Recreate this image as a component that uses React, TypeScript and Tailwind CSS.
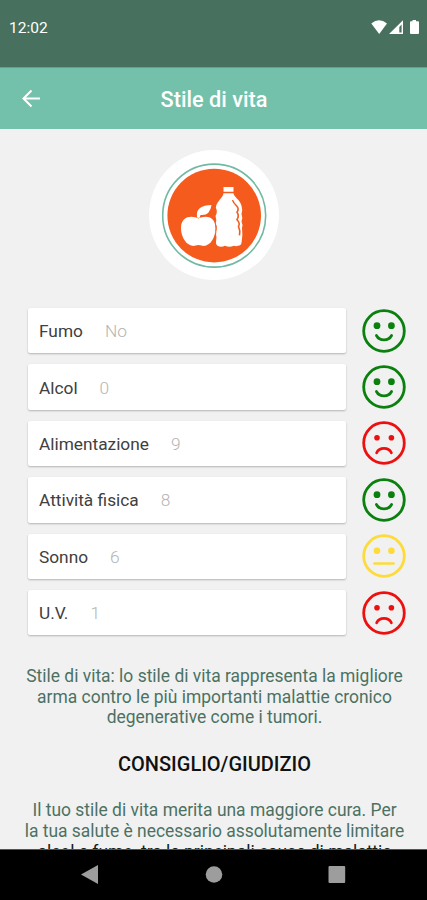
type Mood = "happy" | "neutral" | "sad";

type HabitRowProps = {
  label: string;
  value: string;
  mood: Mood;
};

const habits: HabitRowProps[] = [
  { label: "Fumo", value: "No", mood: "happy" },
  { label: "Alcol", value: "0", mood: "happy" },
  { label: "Alimentazione", value: "9", mood: "sad" },
  { label: "Attività fisica", value: "8", mood: "happy" },
  { label: "Sonno", value: "6", mood: "neutral" },
  { label: "U.V.", value: "1", mood: "sad" },
];

const moodConfig = {
  happy: { color: "text-[#0b800f]", mouth: "M14.4 26.5C17.5 32.4 26.5 32.4 29.6 26.5", eye: 3.4 },
  neutral: { color: "text-[#fddb3a]", mouth: "M12.5 29.5H31.5", eye: 3.3 },
  sad: { color: "text-[#ec1010]", mouth: "M14.6 31.8C17.5 26 26.5 26 29.4 31.8", eye: 2.8 },
};

function MoodFace({ mood }: { mood: Mood }) {
  const { color, mouth, eye } = moodConfig[mood];

  return (
    <svg viewBox="0 0 44 44" className={`size-11 shrink-0 ${color}`} fill="none" stroke="currentColor">
      <circle cx="22" cy="22" r="20.3" strokeWidth="2.8" />
      <circle cx="15" cy="16.7" r={eye} fill="currentColor" stroke="none" />
      <circle cx="29.4" cy="16.7" r={eye} fill="currentColor" stroke="none" />
      <path d={mouth} strokeWidth="2.7" strokeLinecap="round" />
    </svg>
  );
}

function HabitRow({ label, value, mood }: HabitRowProps) {
  return (
    <div className="flex h-[45.4px] items-center justify-between">
      <div className="flex h-full w-[318px] items-center gap-[22px] rounded-[2px] bg-white pt-[3px] pl-[11px] text-[17.3px] shadow-[0_1px_2px_rgba(0,0,0,0.25)]">
        <span className="text-[#404040]">{label}</span>
        <span className="font-light text-[#b4b4b4]">{value}</span>
      </div>
      <MoodFace mood={mood} />
    </div>
  );
}

function StatusBar() {
  return (
    <div className="flex h-[67px] shrink-0 items-start justify-between bg-[#48705e] pt-[18px] pr-[7px] pl-[9px] text-white">
      <span className="text-[15.5px] leading-5">12:02</span>
      <svg viewBox="0 0 50 16" className="mt-[1px] h-4 w-[50px]" fill="currentColor">
        <path d="M1.3 4.5Q9 -2 17 4.5L9.2 15Z" />
        <path fillRule="evenodd" d="M19 15L33 1.3V15ZM29.3 8V13.5H31.6V5.5Z" />
        <path d="M42.5 1H46V2.2H48Q49 2.2 49 3.2V14Q49 15 48 15H41Q40 15 40 14V3.2Q40 2.2 41 2.2H42.5Z" />
      </svg>
    </div>
  );
}

function Header() {
  return (
    <header className="grid h-[62px] shrink-0 grid-cols-[1fr_auto_1fr] items-center border-t border-[#62a18b] bg-[#73c1aa] text-white">
      <svg viewBox="0 0 20 20" className="ml-[21px] size-5" fill="none" stroke="currentColor" strokeWidth="2">
        <path d="M19 9.5H3M10.5 1.5L2.5 9.5L10.5 17.5" />
      </svg>
      <h1 className="pt-[3px] pl-[1px] text-[21.7px] font-medium">Stile di vita</h1>
    </header>
  );
}

function FoodBadge() {
  return (
    <svg viewBox="0 0 130 130" className="mx-auto h-[130px] w-[130px]">
      <circle cx="65" cy="65" r="65" fill="#fff" />
      <circle cx="65.2" cy="65.6" r="51.5" fill="none" stroke="#72b9a4" strokeWidth="1.6" />
      <circle cx="65.2" cy="65.6" r="46.8" fill="#f45b1d" />
      {/* apple */}
      <path
        fill="#fff"
        d="M49.5 68.5C44 65.5 32 65 32 78C32 86 36 93 41 95C45 97 46 95 49.5 95C53 95 54 97 58 95C63 93 66.5 86 66.5 78C66.5 65 55 65.5 49.5 68.5Z"
      />
      <path fill="#fff" d="M48 67.5Q47 61 51 58Q55 55 62.5 55Q61 66 51.5 65L50.5 68Z" />
      {/* bottle */}
      <g transform="translate(-1 2.7) scale(1 0.93)">
        <path
          fill="#fff"
          d="M75.5 37H85.5V42H75.5ZM75.5 43.5H85.5C86 48 92 50 93.5 57Q95 62 93.5 66Q95 70 93.5 74Q95 77 94 81Q95 88 93.5 97Q93 100 90 100Q88 101 86 100Q81 102 77 100Q73 102 69.5 100Q67.5 99 68 96Q69 90 67.5 85Q70 80 67.5 76Q69 72 67.5 68Q70 64 67.8 59C69 51 75 49 75.5 43.5Z"
        />
        <path
          fill="none"
          stroke="#f45b1d"
          strokeWidth="1.6"
          d="M84.5 51Q85.5 54 88.5 57Q91.5 60 89 64Q91.5 68 89 72Q92.5 76 90.5 79Q92.5 84 91.5 89"
        />
      </g>
      {/* gap where the apple overlaps the bottle */}
      <path fill="none" stroke="#f45b1d" strokeWidth="0.9" d="M66.2 72Q68.2 78 66.4 86" />
    </svg>
  );
}

function NavigationBar() {
  return (
    <nav className="h-[51px] shrink-0 border-t border-[#555] bg-black">
      <svg viewBox="0 0 427 50" className="h-[50px] w-full" fill="#9d9d9d">
        <path d="M81 24.5L98 15V34Z" />
        <circle cx="214" cy="24.5" r="8.3" />
        <rect x="328.5" y="16" width="16.7" height="17" rx="1" />
      </svg>
    </nav>
  );
}

export default function App() {
  return (
    <div className="flex h-[900px] w-[427px] flex-col overflow-hidden bg-[#f1f1f1] font-['Roboto',sans-serif]">
      <StatusBar />
      <Header />
      <main className="min-h-0 flex-1 overflow-hidden pt-[21px]">
        <FoodBadge />
        <section className="mt-7 flex flex-col gap-[11px] pr-[21px] pl-7">
          {habits.map((habit) => (
            <HabitRow key={habit.label} {...habit} />
          ))}
        </section>
        <section className="mt-[30.5px] pl-[2px] text-center text-[17.45px] leading-[20.7px] whitespace-nowrap text-[#4c7163]">
          <p>
            Stile di vita: lo stile di vita rappresenta la migliore
            <br />
            arma contro le più importanti malattie cronico
            <br />
            degenerative come i tumori.
          </p>
          <h2 className="mt-[24px] text-[20px] leading-6 font-medium text-[#111]">CONSIGLIO/GIUDIZIO</h2>
          <p className="mt-[24.5px]">
            Il tuo stile di vita merita una maggiore cura. Per
            <br />
            la tua salute è necessario assolutamente limitare
            <br />
            <span className="text-[#10231b]">alcol e fumo, tra le principali cause di malattie</span>
          </p>
        </section>
      </main>
      <NavigationBar />
    </div>
  );
}
